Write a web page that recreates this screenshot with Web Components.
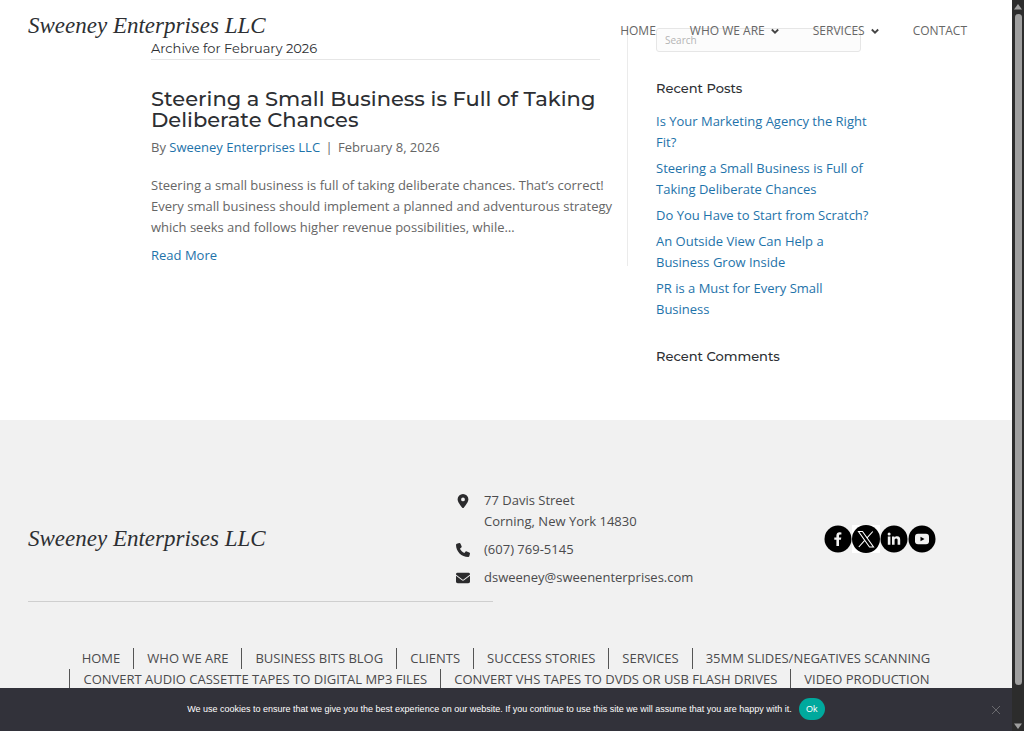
<!DOCTYPE html>
<html lang="en">
<head>
<meta charset="utf-8">
<meta name="viewport" content="width=device-width, initial-scale=1">
<title>February 2026 - Sweeney Enterprises LLC</title>
<style>
  html, body { margin: 0; height: 100%; }
  body {
    --link: #1e73aa; --ink: #2d2f33; --text: #666;
    --heading: Montserrat, Inter, sans-serif;
    font: 13px/21px "Open Sans", sans-serif; color: var(--text); background: #fff;
  }
</style>
</head>
<body>
<site-shell>
  <site-header slot="header"></site-header>
  <blog-layout>
    <archive-post></archive-post>
    <blog-sidebar slot="side"></blog-sidebar>
  </blog-layout>
  <site-footer></site-footer>
  <cookie-notice slot="notice"></cookie-notice>
</site-shell>
<script>
const define = (name, html) => customElements.define(name, class extends HTMLElement {
  constructor() {
    super();
    const t = document.createElement('template');
    t.innerHTML = html;
    this.attachShadow({ mode: 'open' }).append(t.content.cloneNode(true));
  }
});

define('site-shell', `
<style>
  :host { display: grid; grid-template-columns: 1fr 12px; height: 100vh; overflow: hidden; }
  .view { position: relative; overflow: hidden; display: flex; flex-direction: column; min-width: 0; }
  .page { flex: 1; overflow: hidden; }
  .over-top { position: absolute; inset: 0 0 auto 0; }
  .over-bottom { position: absolute; inset: auto 0 0 0; }
  .bar { background: #2c2c2c; display: flex; flex-direction: column; align-items: center; justify-content: space-between; padding: 4px 0 2px; box-sizing: border-box; }
  .thumb { flex: 1; width: 7px; border-radius: 4px; background: #9f9f9f; margin: 4px 0 38px; }
  svg { display: block; width: 8px; height: 6px; fill: #9f9f9f; }
</style>
<div class="view">
  <div class="page"><slot></slot></div>
  <div class="over-top"><slot name="header"></slot></div>
  <div class="over-bottom"><slot name="notice"></slot></div>
</div>
<div class="bar" aria-hidden="true">
  <svg viewBox="0 0 8 6"><path d="M4 0 8 5.500H0z"/></svg>
  <div class="thumb"></div>
  <svg viewBox="0 0 8 6"><path d="M4 6 8 .5H0z"/></svg>
</div>`);

define('brand-name', `
<style>
  :host { display: block; }
  a { font: italic 23px/28px "Liberation Serif", serif; color: var(--ink); text-decoration: none; white-space: nowrap; }
</style>
<a href="#">Sweeney Enterprises LLC</a>`);

define('site-header', `
<style>
  :host { display: flex; justify-content: space-between; align-items: flex-start; padding: 12px 45px 0 28px; }
  nav { display: flex; gap: 34px; padding-top: 8px; }
  a { font-size: 12px; color: #666; text-decoration: none; display: flex; align-items: center; gap: 6px; }
  svg { width: 8px; height: 8px; fill: none; stroke: #444; stroke-width: 1.8; }
</style>
<brand-name></brand-name>
<nav aria-label="Main">
  <a href="#">HOME</a>
  <a href="#">WHO WE ARE <svg viewBox="0 0 8 8"><path d="M.8 2.500 4 5.700 7.200 2.500"/></svg></a>
  <a href="#">SERVICES <svg viewBox="0 0 8 8"><path d="M.8 2.500 4 5.700 7.200 2.500"/></svg></a>
  <a href="#">CONTACT</a>
</nav>`);

define('blog-layout', `
<style>
  :host { display: grid; grid-template-columns: 1fr 205px; gap: 28px; width: 90%; max-width: 710px; margin: 0 auto; padding: 28px 0 53px; align-items: start; }
  main { border-right: 1px solid #ebebeb; padding: 10px 27px 0 0; }
</style>
<main><slot></slot></main>
<aside><slot name="side"></slot></aside>`);

define('archive-post', `
<style>
  :host { display: block; }
  h1, h2 { font-family: var(--heading); font-weight: 500; color: var(--ink); margin: 0; }
  h1 { font-size: 13px; font-weight: 400; line-height: 21px; border-bottom: 1px solid #e6e6e6; margin-bottom: 28px; }
  h2 { font-size: 21px; line-height: 21px; margin-bottom: 7px; }
  p { margin: 0 -14px 7px 0; }
  .meta { margin-bottom: 17px; }
  .meta span { margin: 0 2px; }
  a { color: var(--link); text-decoration: none; }
</style>
<h1>Archive for February 2026</h1>
<article>
  <h2>Steering a Small Business is Full of Taking Deliberate Chances</h2>
  <p class="meta">By <a href="#">Sweeney Enterprises LLC</a> <span>|</span> February 8, 2026</p>
  <p>Steering a small business is full of taking deliberate chances. That’s correct! Every small business should implement a planned and adventurous strategy which seeks and follows higher revenue possibilities, while…</p>
  <a href="#">Read More</a>
</article>`);

define('blog-sidebar', `
<style>
  :host { display: block; }
  input { display: block; width: 100%; height: 24px; box-sizing: border-box; border: 1px solid #e6e6e6; border-radius: 3px; background: #fcfcfc; padding: 0 8px; font: 10px/14px "Open Sans", sans-serif; color: #666; }
  input::placeholder { color: #b4b4b4; }
  h4 { font: 500 13px/21px var(--heading); color: var(--ink); margin: 26px 0 12px; }
  h4:last-child { margin-bottom: 0; }
  ul { list-style: none; margin: 0 -10px 0 0; padding: 0; display: flex; flex-direction: column; gap: 5px; }
  a { color: var(--link); text-decoration: none; }
</style>
<input type="search" placeholder="Search" aria-label="Search">
<h4>Recent Posts</h4>
<ul>
  <li><a href="#">Is Your Marketing Agency the Right Fit?</a></li>
  <li><a href="#">Steering a Small Business is Full of Taking Deliberate Chances</a></li>
  <li><a href="#">Do You Have to Start from Scratch?</a></li>
  <li><a href="#">An Outside View Can Help a Business Grow Inside</a></li>
  <li><a href="#">PR is a Must for Every Small Business</a></li>
</ul>
<h4>Recent Comments</h4>`);

define('social-links', `
<style>
  :host { display: flex; }
  a { display: block; width: 28px; height: 28px; }
  .boxed { background: #fff; }
  svg { display: block; }
</style>
<a href="#" aria-label="Facebook"><svg viewBox="0 0 28 28"><circle cx="14" cy="14" r="13.500"/><path fill="#f1f1f1" d="M12.400 21v-6.200h-2.100v-2.400h2.100v-1.800c0-2.200 1.300-3.400 3.200-3.400l1.800.2v2h-1.100c-1 0-1.300.6-1.300 1.300v1.700h2.300l-.4 2.400h-1.900V21z"/></svg></a>
<a class="boxed" href="#" aria-label="X"><svg viewBox="0 0 28 28"><circle cx="14" cy="14" r="14"/><g fill="none" stroke="#fff" stroke-width="1.100"><path d="M6.500 6.500h4l11 15.500h-4z"/><path d="M20.800 6.500 14.800 13.200M12.700 15.400 6.800 22"/></g></svg></a>
<a href="#" aria-label="LinkedIn"><svg viewBox="0 0 28 28"><circle cx="14" cy="14" r="13.500"/><g fill="#f1f1f1"><circle cx="9.100" cy="9" r="1.500"/><path d="M7.800 11.400h2.600v8.300H7.800zM12 11.400h2.500v1.200c.5-.9 1.400-1.400 2.600-1.400 2.500 0 3.100 1.600 3.100 3.900v4.600h-2.600v-4.200c0-1.200-.1-2.100-1.400-2.100s-1.600.9-1.600 2.100v4.200H12z"/></g></svg></a>
<a href="#" aria-label="YouTube"><svg viewBox="0 0 28 28"><circle cx="14" cy="14" r="13.500"/><rect x="7" y="8.700" width="14" height="10.600" rx="3" fill="#f1f1f1"/><path d="m12.500 11.700 4 2.300-4 2.300z"/></svg></a>`);

define('contact-list', `
<style>
  :host { display: block; }
  ul { list-style: none; margin: 0; padding: 0; display: flex; flex-direction: column; gap: 7px; }
  li { display: grid; grid-template-columns: 14px 1fr; gap: 14px; }
  svg { width: 14px; height: 14px; margin-top: 4px; fill: #2b2b2d; }
  a { color: inherit; text-decoration: none; }
</style>
<ul>
  <li><svg viewBox="0 0 14 14"><path fill-rule="evenodd" d="M7 0a5.400 5.400 0 0 0-5.400 5.300C1.600 8 4.800 12 6.300 13.700a.9.9 0 0 0 1.400 0C9.200 12 12.400 8 12.400 5.300A5.400 5.400 0 0 0 7 0zm0 7.300A1.900 1.900 0 1 1 7 3.500a1.900 1.900 0 0 1 0 3.800z"/></svg><span>77 Davis Street<br>Corning, New York 14830</span></li>
  <li><svg viewBox="0 0 512 512"><path d="M164.900 24.600c-7.700-18.600-28-28.500-47.400-23.200l-88 24C12.100 30.200 0 46 0 64c0 247.400 200.600 448 448 448 18 0 33.800-12.100 38.600-29.500l24-88c5.300-19.400-4.600-39.700-23.200-47.400l-96-40c-16.300-6.800-35.200-2.100-46.300 11.600L304.700 368C234.300 334.700 177.300 277.700 144 207.300l49.300-40.300c13.700-11.200 18.400-30 11.600-46.300z"/></svg><a href="tel:6077695145">(607) 769-5145</a></li>
  <li><svg viewBox="0 0 512 512"><path d="M48 64a48 48 0 0 0-28.800 86.400l217.600 163.200c11.400 8.500 27 8.500 38.400 0l217.600-163.200A48 48 0 0 0 464 64zM0 176v208c0 35.300 28.700 64 64 64h384c35.300 0 64-28.700 64-64V176L294.400 339.200a64 64 0 0 1-76.800 0z"/></svg><a href="mailto:dsweeney@sweenenterprises.com">dsweeney@sweenenterprises.com</a></li>
</ul>`);

define('site-footer', `
<style>
  :host { display: block; background: #f1f1f1; color: #4b4b4d; padding: 70px 28px 80px; }
  .row { display: grid; grid-template-columns: 428px 1fr auto; align-items: center; }
  social-links { margin-right: 48px; }
  hr { border: 0; border-top: 1px solid #cfcfcf; margin: 13px 0 46px; max-width: 465px; }
  nav { display: flex; flex-wrap: wrap; justify-content: center; }
  nav a { color: inherit; text-decoration: none; padding: 0 13px; border-left: 1px solid #555; }
  nav a:first-child { border-left: 0; }
</style>
<div class="row">
  <brand-name></brand-name>
  <contact-list></contact-list>
  <social-links></social-links>
</div>
<hr>
<nav aria-label="Footer">
  <a href="#">HOME</a><a href="#">WHO WE ARE</a><a href="#">BUSINESS BITS BLOG</a><a href="#">CLIENTS</a><a href="#">SUCCESS STORIES</a><a href="#">SERVICES</a><a href="#">35MM SLIDES/NEGATIVES SCANNING</a><a href="#">CONVERT AUDIO CASSETTE TAPES TO DIGITAL MP3 FILES</a><a href="#">CONVERT VHS TAPES TO DVDS OR USB FLASH DRIVES</a><a href="#">VIDEO PRODUCTION</a>
</nav>`);

define('cookie-notice', `
<style>
  :host { display: flex; align-items: center; justify-content: center; gap: 7px; position: relative; background: #32323a; color: #fff; padding: 10px 28px 11px; font: 9px/12px "Liberation Sans", Arial, sans-serif; }
  button { font: inherit; border: 0; cursor: pointer; }
  .ok { background: #00a99d; color: #fff; border-radius: 11px; width: 26px; height: 22px; padding: 0; }
  .close { position: absolute; right: 10px; top: 16px; width: 12px; height: 12px; padding: 0; background: none; }
  svg { display: block; width: 12px; height: 12px; stroke: #6a6a6e; stroke-width: 1; }
</style>
<span>We use cookies to ensure that we give you the best experience on our website. If you continue to use this site we will assume that you are happy with it.</span>
<button class="ok">Ok</button>
<button class="close" aria-label="Close"><svg viewBox="0 0 12 12"><path d="m2 2 8 8M10 2l-8 8"/></svg></button>`);
</script>
</body>
</html>
